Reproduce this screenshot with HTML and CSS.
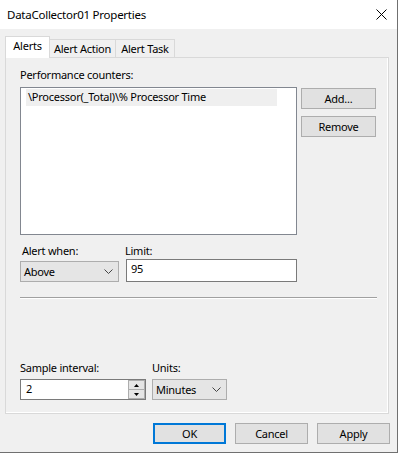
FILE: index.html
```html
<!DOCTYPE html>
<html lang="en">
  <head>
    <meta charset="UTF-8" />
    <title>DataCollector01 Properties</title>
    <link rel="stylesheet" href="styles.css">
  </head>
  <body>
    <div class="window">
      <div class="titlebar">
        <div class="title">DataCollector01 Properties</div>
        <svg class="close" width="11" height="11" viewBox="0 0 11 11">
          <path d="M0.5 0.5 L10.5 10.5 M10.5 0.5 L0.5 10.5" stroke="#000" stroke-width="1" fill="none" />
        </svg>
      </div>

      <div class="content">
        <div class="tabs">
          <div class="tab active">Alerts</div>
          <div class="tab action">Alert Action</div>
          <div class="tab task">Alert Task</div>
        </div>

        <div class="panel">
          <div class="label">Performance counters:</div>
          <div class="counters">
            <div class="listbox">
              <div class="list-item">\Processor(_Total)\% Processor Time</div>
            </div>
            <div class="side-buttons">
              <button class="btn">Add...</button>
              <button class="btn">Remove</button>
            </div>
          </div>

          <div class="alert-row">
            <div class="field when">
              <div class="label indent">Alert when:</div>
              <div class="combo">
                <span>Above</span>
                <svg width="9" height="5" viewBox="0 0 9 5"><polyline points="0.5,0.5 4.5,4.5 8.5,0.5" fill="none" stroke="#444" /></svg>
              </div>
            </div>
            <div class="field limit">
              <div class="label">Limit:</div>
              <div class="textbox">95</div>
            </div>
          </div>

          <div class="separator"></div>

          <div class="sample-row">
            <div class="field">
              <div class="label">Sample interval:</div>
              <div class="spinbox">
                <span class="value">2</span>
                <div class="spin">
                  <div class="spin-btn"><svg width="5" height="3" viewBox="0 0 5 3"><polygon points="2.5,0 5,3 0,3" fill="#000" /></svg></div>
                  <div class="spin-btn"><svg width="5" height="3" viewBox="0 0 5 3"><polygon points="0,0 5,0 2.5,3" fill="#000" /></svg></div>
                </div>
              </div>
            </div>
            <div class="field">
              <div class="label">Units:</div>
              <div class="combo units">
                <span>Minutes</span>
                <svg width="9" height="5" viewBox="0 0 9 5"><polyline points="0.5,0.5 4.5,4.5 8.5,0.5" fill="none" stroke="#444" /></svg>
              </div>
            </div>
          </div>
        </div>

        <div class="actions">
          <button class="btn default">OK</button>
          <button class="btn">Cancel</button>
          <button class="btn">Apply</button>
        </div>
      </div>
    </div>
  </body>
</html>
```

FILE: styles.css
```css
body {
  margin: 0;
  background-color: #ffffff;
  font-family: "Noto Sans", "Open Sans", sans-serif;
  font-size: 11px;
  letter-spacing: -0.25px;
  color: #000;
}

.window {
  width: 397px;
  height: 452px;
  border-right: 1px solid #707070;
  border-bottom: 1px solid #707070;
  display: flex;
  flex-direction: column;
}

.titlebar {
  height: 29px;
  background-color: #fff;
  display: flex;
  align-items: center;
  justify-content: space-between;
  padding: 0 10px 0 7px;
  font-size: 11.5px;
}

.close {
  margin-top: -1px;
}

.content {
  flex: 1;
  background-color: #f0f0f0;
  padding-top: 7px;
}

.tabs {
  display: flex;
  align-items: flex-end;
  padding-left: 5px;
  height: 21px;
  position: relative;
  z-index: 1;
}

.tab {
  height: 18px;
  line-height: 17px;
  padding: 0;
  text-align: center;
  border: 1px solid #d9d9d9;
  border-bottom: none;
  border-left: none;
  background-color: #f0f0f0;
  box-sizing: border-box;
}

.tab.action {
  width: 66px;
}

.tab.task {
  width: 59px;
}

.tab.active {
  height: 22px;
  line-height: 18px;
  border-left: 1px solid #d9d9d9;
  background-color: #fff;
  margin-bottom: -1px;
  width: 45px;
}

.panel {
  margin: 0 8px 0 5px;
  height: 357px;
  box-sizing: border-box;
  border: 1px solid #d9d9d9;
  box-shadow: inset -2px -2px 0 -1px #fff;
  background-color: #f0f0f0;
  padding: 9px 12px 0 14px;
}

.label {
  height: 15px;
  line-height: 15px;
}

.label.indent {
  padding-left: 2px;
}

.counters {
  display: flex;
  margin-top: 5px;
}

.listbox {
  width: 277px;
  height: 148px;
  box-sizing: border-box;
  border: 1px solid #828790;
  background-color: #fff;
  padding: 1px 0 0 5px;
}

.list-item {
  width: 251px;
  height: 17px;
  line-height: 16px;
  padding-left: 2px;
  box-sizing: border-box;
  background-color: #efefef;
}

.side-buttons {
  display: flex;
  flex-direction: column;
  gap: 7px;
  margin: 1px 0 0 4px;
}

.btn {
  width: 75px;
  height: 21px;
  padding: 0;
  border: 1px solid #adadad;
  background-color: #e1e1e1;
  font-family: inherit;
  font-size: 11px;
  letter-spacing: -0.25px;
  color: #000;
}

.alert-row {
  display: flex;
  gap: 6px;
  margin-top: 8px;
}

.field {
  display: flex;
  flex-direction: column;
}

.combo {
  height: 21px;
  box-sizing: border-box;
  border: 1px solid #adadad;
  background-color: #e5e5e5;
  display: flex;
  align-items: center;
  justify-content: space-between;
  padding: 0 5px 0 3px;
}

.when .combo {
  width: 99px;
}

.when .label {
  height: 18px;
}

.limit .label {
  height: 16px;
}

.textbox {
  width: 171px;
  height: 23px;
  box-sizing: border-box;
  border: 1px solid #7a7a7a;
  background-color: #fff;
  margin-left: 1px;
  padding-left: 4px;
  line-height: 18px;
}

.separator {
  width: 357px;
  height: 1px;
  margin-top: 15px;
  background-color: #a0a0a0;
  border-bottom: 1px solid #fff;
}

.sample-row {
  display: flex;
  gap: 6px;
  margin-top: 61px;
}

.sample-row .label {
  height: 19px;
}

.spinbox {
  width: 126px;
  height: 21px;
  box-sizing: border-box;
  border: 1px solid #7a7a7a;
  background-color: #fff;
  display: flex;
  justify-content: space-between;
}

.spinbox .value {
  padding-left: 5px;
  line-height: 17px;
}

.spin {
  display: flex;
  flex-direction: column;
  width: 17px;
}

.spin-btn {
  flex: 1;
  border: 1px solid #adadad;
  background-color: #e5e5e5;
  display: flex;
  align-items: center;
  justify-content: center;
}

.spin-btn + .spin-btn {
  border-top: none;
}

.combo.units {
  width: 75px;
}

.actions {
  display: flex;
  justify-content: flex-end;
  gap: 9px;
  padding: 9px 7px 0 0;
}

.actions .btn {
  width: 73px;
}

.btn.default {
  border: 2px solid #0078d7;
}
```
